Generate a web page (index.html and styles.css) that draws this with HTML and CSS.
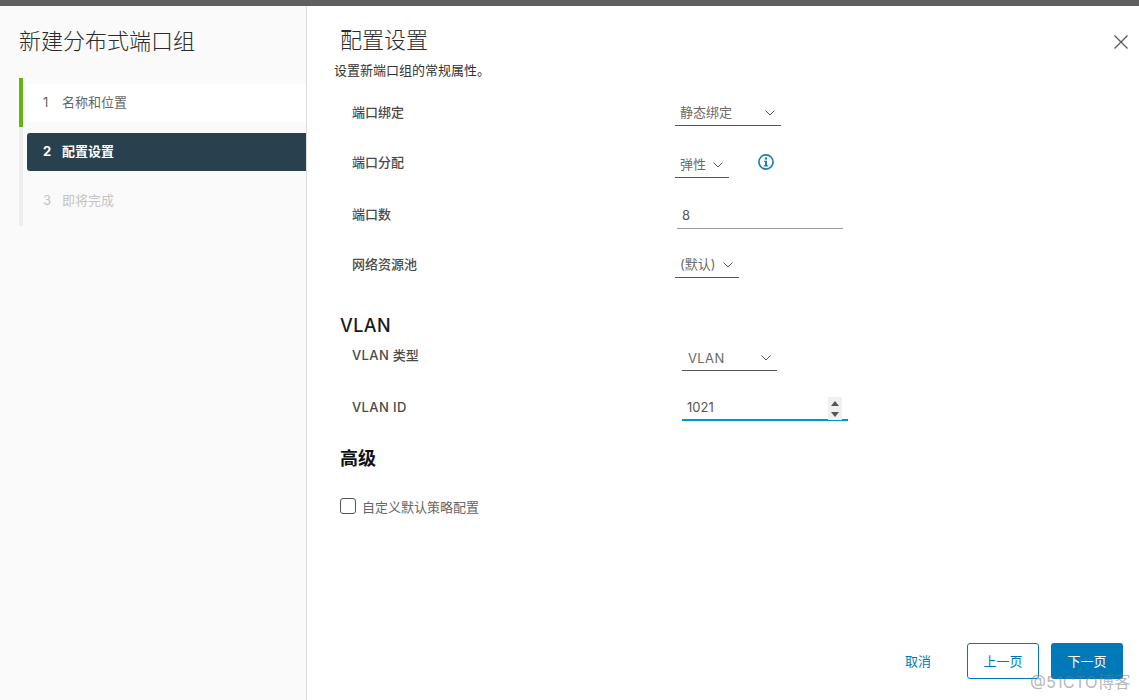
FILE: index.html
```html
<!DOCTYPE html>
<html lang="zh-CN">
<head>
    <meta charset="UTF-8">
    <title>新建分布式端口组</title>
    <link rel="stylesheet" href="styles.css">
</head>
<body>
    <div class="topbar"></div>
    <div class="wizard">
        <div class="sidebar">
            <h1 class="wizard-title">新建分布式端口组</h1>
            <div class="steps">
                <div class="step step-done"><span class="step-num">1</span>名称和位置</div>
                <div class="step step-active"><span class="step-num">2</span>配置设置</div>
                <div class="step step-todo"><span class="step-num">3</span>即将完成</div>
            </div>
        </div>

        <div class="main">
            <svg class="close" width="14" height="14" viewBox="0 0 14 14"><path d="M0.5 0.5L13.5 13.5M13.5 0.5L0.5 13.5" stroke="#555" stroke-width="1.2" fill="none"/></svg>
            <h2 class="page-title">配置设置</h2>
            <p class="page-desc">设置新端口组的常规属性。</p>

            <div class="form general">
                <div class="label">端口绑定</div>
                <div class="cell">
                    <div class="select select-binding"><span class="select-text">静态绑定</span>
                        <svg class="chev" width="10" height="6" viewBox="0 0 10 6"><path d="M0.5 0.5L5 5L9.5 0.5" stroke="#555" fill="none"/></svg>
                    </div>
                </div>
                <div class="label">端口分配</div>
                <div class="cell">
                    <div class="select select-alloc"><span class="select-text">弹性</span>
                        <svg class="chev" width="10" height="6" viewBox="0 0 10 6"><path d="M0.5 0.5L5 5L9.5 0.5" stroke="#555" fill="none"/></svg>
                    </div>
                    <svg class="info" width="16" height="16" viewBox="0 0 16 16">
                        <circle cx="8" cy="8" r="7.1" stroke="#1b7fae" stroke-width="1.7" fill="none"/>
                        <circle cx="8" cy="4.5" r="1.2" fill="#1b7fae"/>
                        <path d="M6 6.8H9V11.2H10.2V12.4H5.8V11.2H7V8H6Z" fill="#1b7fae"/>
                    </svg>
                </div>
                <div class="label">端口数</div>
                <div class="cell">
                    <div class="input input-ports">8</div>
                </div>
                <div class="label">网络资源池</div>
                <div class="cell">
                    <div class="select select-pool"><span class="select-text">(默认)</span>
                        <svg class="chev" width="10" height="6" viewBox="0 0 10 6"><path d="M0.5 0.5L5 5L9.5 0.5" stroke="#555" fill="none"/></svg>
                    </div>
                </div>
            </div>

            <h3 class="section vlan-title"><span class="latin">VLAN</span></h3>
            <div class="form vlan">
                <div class="label"><span class="latin">VLAN</span> 类型</div>
                <div class="cell">
                    <div class="select select-vlan"><span class="latin">VLAN</span>
                        <svg class="chev" width="10" height="6" viewBox="0 0 10 6"><path d="M0.5 0.5L5 5L9.5 0.5" stroke="#555" fill="none"/></svg>
                    </div>
                </div>
                <div class="label latin">VLAN ID</div>
                <div class="cell">
                    <div class="input input-vlan">1021
                        <div class="spinner">
                            <svg width="8" height="5" viewBox="0 0 8 5"><path d="M4 0L8 5H0Z" fill="#555"/></svg>
                            <svg width="8" height="5" viewBox="0 0 8 5"><path d="M0 0H8L4 5Z" fill="#555"/></svg>
                        </div>
                    </div>
                </div>
            </div>

            <h3 class="section adv-title">高级</h3>
            <div class="check-row"><span class="checkbox"></span>自定义默认策略配置</div>

            <div class="footer">
                <button class="btn btn-link">取消</button>
                <button class="btn btn-outline">上一页</button>
                <button class="btn btn-primary">下一页</button>
            </div>
        </div>
    </div>
    <div class="watermark">@51CTO博客</div>
</body>
</html>
```

FILE: styles.css
```css
body {
    margin: 0;
    height: 700px;
    overflow: hidden;
    background-color: #fff;
    font-family: Inter, "Noto Sans CJK SC", sans-serif;
    font-size: 13px;
    color: #565656;
}
.topbar {
    height: 6px;
    background-color: #5f5f5f;
}
.wizard {
    display: flex;
    height: 694px;
}
.sidebar {
    width: 306px;
    background-color: #fafafa;
    border-right: 1px solid #dcdcdc;
}
.wizard-title {
    margin: 20px 0 0 19px;
    font-size: 22px;
    line-height: 30px;
    font-weight: 300;
    color: #2b2b2b;
}
.steps {
    margin: 22px 0 0 19px;
    padding: 6px 0;
    height: 136px;
    border-left: 4px solid #eee;
    position: relative;
}
.steps::before {
    content: "";
    position: absolute;
    left: -4px;
    top: 0;
    width: 4px;
    height: 49px;
    background-color: #60b515;
}
.step {
    margin-left: 4px;
    height: 38px;
    line-height: 37px;
    margin-bottom: 11px;
    padding-left: 16px;
    color: #666;
}
.step-num {
    display: inline-block;
    width: 19px;
}
.step-done {
    background-color: #fff;
}
.step-active {
    background-color: #29414e;
    border-radius: 3px 0 0 3px;
    color: #fff;
    font-weight: 700;
}
.step-todo {
    color: #c4c4c4;
}
.main {
    flex: 1;
    position: relative;
    display: flex;
    flex-direction: column;
}
.close {
    position: absolute;
    left: 807px;
    top: 29px;
}
.page-title {
    margin: 19px 0 0 33px;
    font-size: 22px;
    line-height: 30px;
    font-weight: 300;
    color: #2b2b2b;
}
.page-desc {
    margin: 5px 0 0 27px;
    font-size: 13px;
    line-height: 20px;
    color: #333;
}
.form {
    display: grid;
    margin-left: 45px;
}
.general {
    margin-top: 20px;
    grid-template-columns: 323px 1fr;
    grid-template-rows: 50px 52px 50px 26px;
}
.vlan {
    margin-top: 5px;
    grid-template-columns: 330px 1fr;
    grid-template-rows: 51px 27px;
}
.label {
    line-height: 25px;
    font-weight: 500;
    color: #4a4a4a;
}
.latin {
    letter-spacing: 0.4px;
}
.label.latin {
    line-height: 26px;
}
.cell {
    display: flex;
    align-items: flex-start;
}
.select {
    box-sizing: border-box;
    height: 26px;
    line-height: 26px;
    padding: 0 6px 0 5px;
    display: flex;
    justify-content: space-between;
    align-items: center;
    color: #6a6a6a;
    border-bottom: 1px solid #565656;
}
.select-text {
    margin-bottom: 1px;
}
.select-binding { width: 106px; }
.select-alloc { width: 54px; margin-top: 2px; }
.select-pool { width: 64px; }
.select-vlan { width: 95px; margin-top: 2px; padding-left: 6px; }
.info {
    margin: 4px 0 0 29px;
}
.input {
    box-sizing: border-box;
    height: 27px;
    line-height: 26px;
    position: relative;
    color: #565656;
}
.input-ports {
    width: 166px;
    margin-left: 2px;
    padding-left: 5px;
    border-bottom: 1px solid #9a9a9a;
}
.input-vlan {
    width: 166px;
    padding-left: 5px;
    border-bottom: 2px solid #0095d3;
}
.spinner {
    position: absolute;
    right: 6px;
    top: 3px;
    width: 14px;
    height: 23px;
    background-color: #f0f0f0;
    display: flex;
    flex-direction: column;
    align-items: center;
    justify-content: center;
    gap: 6px;
}
.section {
    margin: 0 0 0 33px;
    font-size: 18px;
    line-height: 24px;
    font-weight: 500;
    color: #1a1a1a;
}
.vlan-title { margin-top: 36px; }
.adv-title {
    margin-top: 26px;
    font-weight: 700;
    color: #111;
}
.check-row {
    display: flex;
    align-items: center;
    margin: 23px 0 0 33px;
    height: 24px;
    color: #666;
}
.checkbox {
    box-sizing: border-box;
    width: 16px;
    height: 16px;
    margin-right: 6px;
    border: 1px solid #565656;
    border-radius: 3px;
}
.footer {
    margin-top: auto;
    padding: 0 16px 21px 0;
    display: flex;
    justify-content: flex-end;
    gap: 12px;
}
.btn {
    box-sizing: border-box;
    width: 72px;
    height: 36px;
    padding: 0 0 2px;
    border: 1px solid transparent;
    border-radius: 3px;
    background: none;
    font-family: inherit;
    font-size: 13px;
    color: #0079b8;
}
.btn-link { margin-right: 1px; }
.btn-outline { border-color: #0079b8; }
.btn-primary {
    background-color: #0079b8;
    color: #fff;
}
.watermark {
    position: absolute;
    left: 1030px;
    top: 672px;
    font-size: 16.5px;
    line-height: 20px;
    color: rgba(120,120,120,0.55);
}
```
